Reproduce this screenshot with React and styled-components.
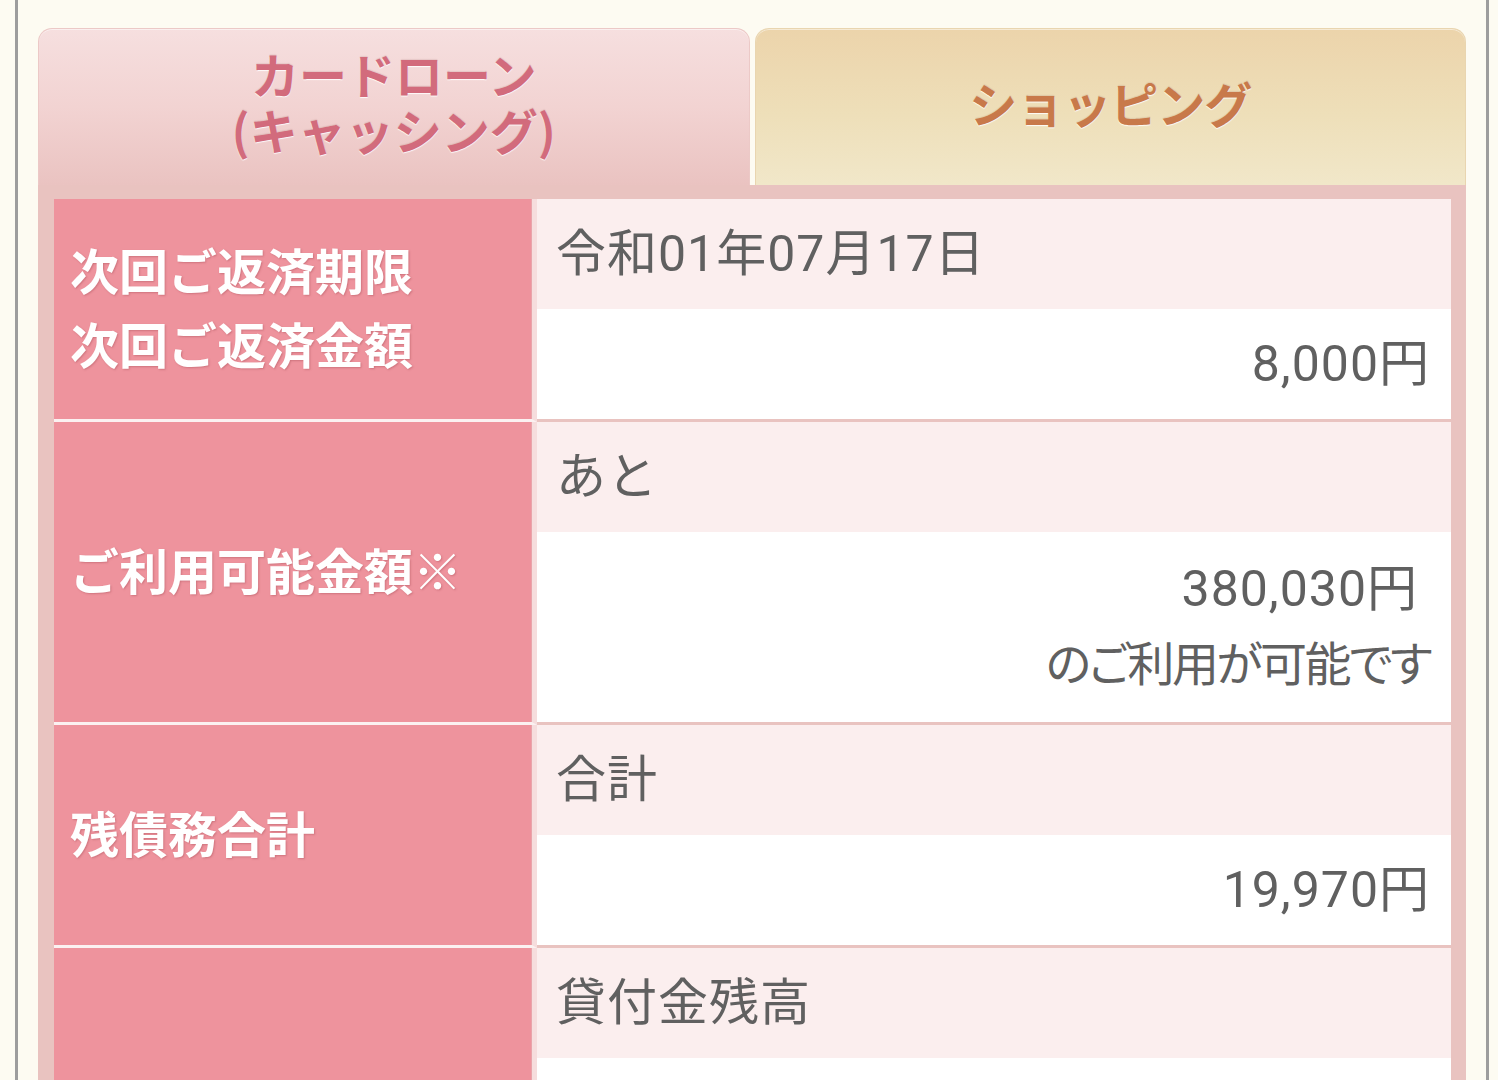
import React from 'react';
import styled, { createGlobalStyle } from 'styled-components';

const GlobalStyle = createGlobalStyle`
  html, body {
    margin: 0;
    padding: 0;
    background: #fdfbf2;
  }
  body {
    font-family: "Noto Sans CJK JP", "Noto Sans", sans-serif;
  }
`;

const Frame = styled.div`
  height: 1080px;
  overflow: hidden;
  margin: 0 9px 0 15px;
  border-left: 3px solid #9d9d9d;
  border-right: 3px solid #9d9d9d;
  background: #fdfbf2;
  padding: 28px 20px 0 20px;
  box-sizing: border-box;
`;

const Tabs = styled.div`
  display: grid;
  grid-template-columns: 1fr 1fr;
  column-gap: 5px;
  height: 157px;
`;

const Tab = styled.div`
  display: flex;
  align-items: center;
  justify-content: center;
  text-align: center;
  border-radius: 14px 14px 0 0;
  font-weight: 700;
  font-size: 48px;
  line-height: 56px;
  letter-spacing: ${(p) => (p.$active ? '0' : '-1px')};
  padding-bottom: ${(p) => (p.$active ? '12px' : '10px')};
  box-sizing: border-box;
  color: ${(p) => (p.$active ? '#d26b7c' : '#c8794a')};
  text-shadow: 0 1px 1px rgba(255, 255, 255, 0.9), 0 -1px 1px rgba(120, 60, 60, 0.12);
  background: ${(p) =>
    p.$active
      ? 'linear-gradient(180deg, #f6dfdf 0%, #f2d3d2 50%, #eac3c1 100%)'
      : 'linear-gradient(180deg, #ecd4ab 0%, #eedfb9 55%, #f1e7c9 100%)'};
  box-shadow: inset 0 1px 0 rgba(255, 255, 255, 0.5);
  border: 1px solid ${(p) => (p.$active ? '#ecc9c7' : '#e9d5b0')};
  border-bottom: none;
`;

const Board = styled.div`
  background: #e9c3c0;
  padding: 14px 15px 0 16px;
`;

const Row = styled.div`
  display: grid;
  grid-template-columns: 483px 1fr;
`;

const Label = styled.div`
  background: #ee939d;
  border-right: 5px solid #f6dddd;
  border-bottom: 3px solid #fbf1f1;
  box-shadow: inset -1px 0 0 #e9a4aa;
  display: flex;
  align-items: center;
  padding: 0 0 6px 16px;
  color: #fff;
  font-weight: 700;
  font-size: 49px;
  line-height: 74px;
  text-shadow: 1px 1px 2px rgba(150, 60, 70, 0.35);
`;

const Values = styled.div`
  display: flex;
  flex-direction: column;
  border-bottom: 3px solid #e9c3c0;
`;

const Cell = styled.div`
  background: ${(p) => (p.$tint ? '#fbeeee' : '#ffffff')};
  padding: 20px 21px 20px 19px;
  text-align: ${(p) => (p.$right ? 'right' : 'left')};
  font-family: Roboto, "Noto Sans CJK JP", sans-serif;
  font-size: 50px;
  line-height: 70px;
  letter-spacing: 1px;
  color: #606060;
`;

const Line = styled.div`
  line-height: 75px;
  padding-right: ${(p) => p.$inset || 0}px;
  font-size: ${(p) => (p.$tight ? '47px' : 'inherit')};
  letter-spacing: ${(p) => (p.$tight ? '-2.5px' : 'inherit')};
  font-feature-settings: ${(p) => (p.$tight ? '"palt"' : 'normal')};
`;

const rows = [
  {
    label: ['次回ご返済期限', '次回ご返済金額'],
    cells: [
      { text: '令和01年07月17日', tint: true },
      { text: '8,000円', right: true },
    ],
  },
  {
    label: ['ご利用可能金額※'],
    cells: [
      { text: 'あと', tint: true },
      {
        lines: [
          { t: '380,030円', inset: 12 },
          { t: 'のご利用が可能です', tight: true },
        ],
        right: true,
      },
    ],
  },
  {
    label: ['残債務合計'],
    cells: [
      { text: '合計', tint: true },
      { text: '19,970円', right: true },
    ],
  },
  {
    label: [],
    cells: [
      { text: '貸付金残高', tint: true },
      { text: '19,970円', right: true },
      { text: 'うち元金', tint: true },
      { text: '19,970円', right: true },
    ],
  },
];

export default function App() {
  return (
    <>
      <GlobalStyle />
      <Frame>
        <Tabs>
          <Tab $active>
            カードローン
            <br />
            (キャッシング)
          </Tab>
          <Tab>ショッピング</Tab>
        </Tabs>
        <Board>
          {rows.map((row, i) => (
            <Row key={i}>
              <Label>
                <div>
                  {row.label.map((l) => (
                    <div key={l}>{l}</div>
                  ))}
                </div>
              </Label>
              <Values>
                {row.cells.map((c, j) => (
                  <Cell key={j} $tint={c.tint} $right={c.right}>
                    {c.lines
                      ? c.lines.map((ln) => (
                          <Line key={ln.t} $inset={ln.inset} $tight={ln.tight}>
                            {ln.t}
                          </Line>
                        ))
                      : c.text}
                  </Cell>
                ))}
              </Values>
            </Row>
          ))}
        </Board>
      </Frame>
    </>
  );
}
